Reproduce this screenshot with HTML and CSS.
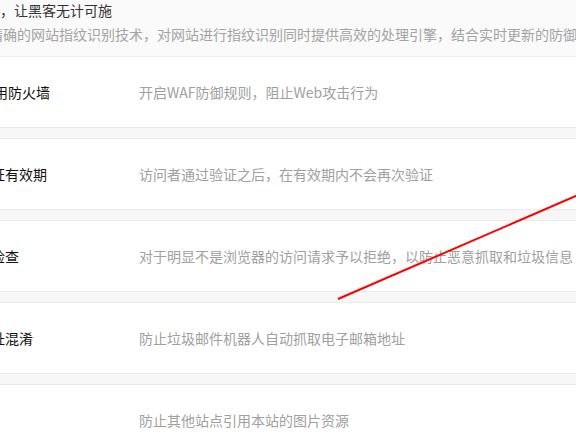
FILE: index.html
```html
<!DOCTYPE html>
<html lang="zh-CN">
<head>
<meta charset="utf-8">
<title>安全设置</title>
<link rel="stylesheet" href="styles.css">
</head>
<body>
<div class="page">
  <header class="intro">
    <h1 class="intro-title">多重防护，让黑客无计可施</h1>
    <p class="intro-desc">采用精确的网站指纹识别技术，对网站进行指纹识别同时提供高效的处理引擎，结合实时更新的防御规则库，全面保护网站安全</p>
  </header>
  <section class="settings">
    <div class="row">
      <div class="label label-shift">启用防火墙</div>
      <div class="desc">开启WAF防御规则，阻止Web攻击行为</div>
    </div>
    <div class="gap"></div>
    <div class="row">
      <div class="label">验证有效期</div>
      <div class="desc">访问者通过验证之后，在有效期内不会再次验证</div>
    </div>
    <div class="gap"></div>
    <div class="row">
      <div class="label">源检查</div>
      <div class="desc">对于明显不是浏览器的访问请求予以拒绝，以防止恶意抓取和垃圾信息</div>
    </div>
    <div class="gap"></div>
    <div class="row">
      <div class="label">地址混淆</div>
      <div class="desc">防止垃圾邮件机器人自动抓取电子邮箱地址</div>
    </div>
    <div class="gap"></div>
    <div class="row">
      <div class="label"></div>
      <div class="desc">防止其他站点引用本站的图片资源</div>
    </div>
  </section>
</div>
<svg class="annotation" width="576" height="441" viewBox="0 0 576 441" aria-hidden="true">
  <line x1="338" y1="299" x2="578" y2="195" stroke="#ff0000" stroke-width="2"/>
</svg>
</body>
</html>
```
FILE: styles.css
```css
html, body {
  margin: 0;
  padding: 0;
  background: #ffffff;
}
body {
  width: 576px;
  height: 441px;
  overflow: hidden;
  position: relative;
  font-family: "Noto Sans CJK SC", "Noto Sans", sans-serif;
  font-size: 14px;
}
.page {
  width: 576px;
  overflow: hidden;
}
.intro {
  background: #fafafa;
  border-bottom: 1px solid #ececec;
  height: 56px;
  overflow: hidden;
}
.intro-title {
  margin: 0 0 0 -56px;
  font-size: 14px;
  font-weight: normal;
  line-height: 20px;
  color: #333333;
  white-space: nowrap;
}
.intro-desc {
  margin: 4px 0 0 -39px;
  font-size: 14px;
  line-height: 20px;
  color: #a3a3a3;
  white-space: nowrap;
}
.settings {
  display: flex;
  flex-direction: column;
}
.row {
  display: flex;
  align-items: center;
  height: 70px;
  background: #ffffff;
  margin-left: -23px;
  white-space: nowrap;
}
.label {
  flex: 0 0 162px;
  color: #111111;
  line-height: 20px;
}
.label-shift {
  padding-left: 3px;
  flex-basis: 159px;
}
.desc {
  color: #a0a0a0;
  line-height: 20px;
}
.gap {
  height: 10px;
  background: #f7f7f7;
  border-top: 1px solid #ebebeb;
  border-bottom: 1px solid #ebebeb;
}
.annotation {
  position: absolute;
  left: 0;
  top: 0;
  pointer-events: none;
}
```
